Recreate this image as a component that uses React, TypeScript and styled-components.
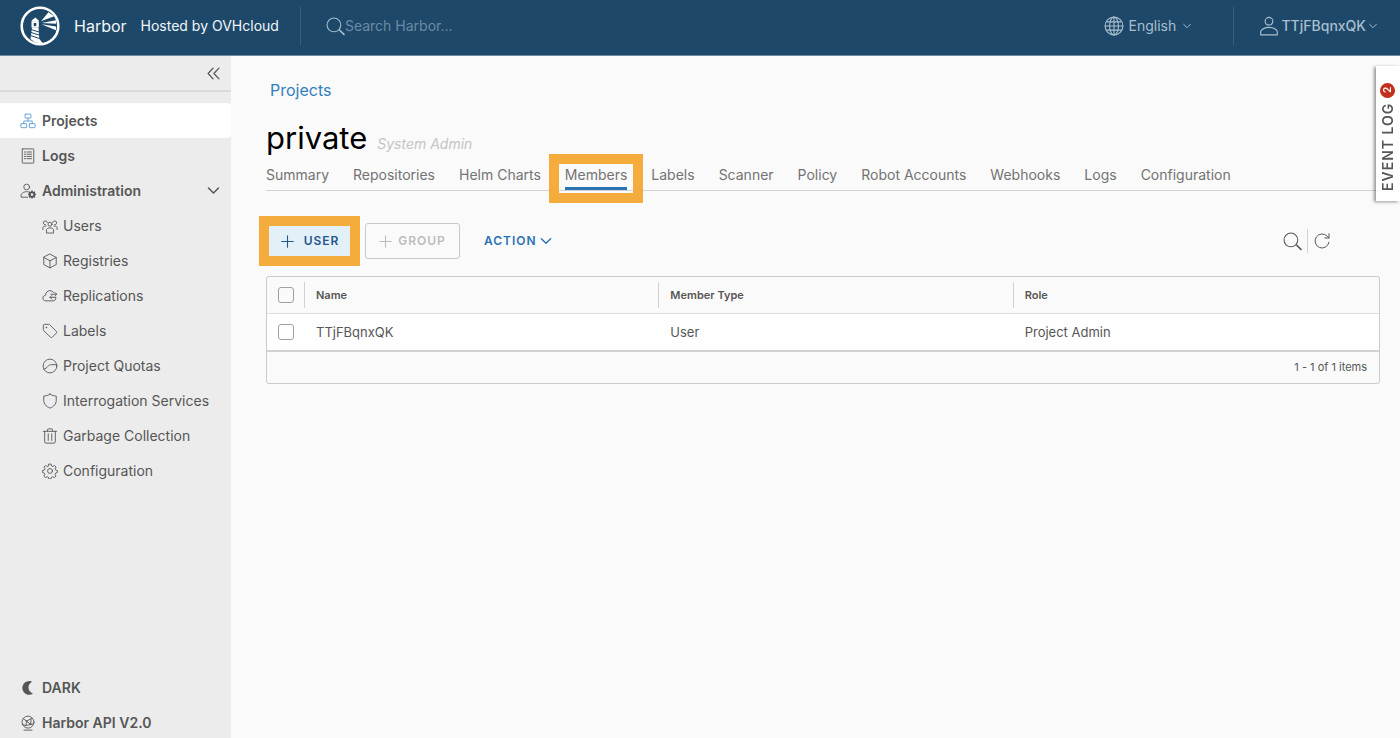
import React from "react";
import styled, { createGlobalStyle, css } from "styled-components";

const color = {
  header: "#1d486a",
  headerText: "#f2f6f9",
  headerMuted: "#a9bfce",
  page: "#fafafa",
  side: "#ececec",
  line: "#d2d2d2",
  text: "#565656",
  muted: "#737373",
  link: "#3180bd",
  accent: "#2b72b5",
  mark: "#f4ad3d",
};

const GlobalStyle = createGlobalStyle`
  *, *::before, *::after { box-sizing: border-box; }
  body {
    margin: 0;
    background: ${color.page};
    color: ${color.text};
    font-family: Inter, "Liberation Sans", sans-serif;
    font-size: 14px;
    line-height: 20px;
  }
  a { color: inherit; text-decoration: none; }
  button, input, select { font: inherit; color: inherit; }
  button { background: none; border: 0; padding: 0; cursor: pointer; }
  ul { list-style: none; margin: 0; padding: 0; }
`;

/* ---------- icons ---------- */

const Svg = styled.svg<{ $size: number }>`
  width: ${(p) => p.$size}px;
  height: ${(p) => p.$size}px;
  flex: none;
  display: block;
  fill: none;
  stroke: currentColor;
  stroke-width: 2;
  stroke-linecap: round;
  stroke-linejoin: round;

  .solid {
    fill: currentColor;
    stroke: none;
  }
`;

const shapes: Record<string, React.ReactNode> = {
  search: (
    <>
      <circle cx="15" cy="15" r="13" />
      <path d="M26 25l8 8" strokeWidth="3" />
    </>
  ),
  globe: (
    <>
      <circle cx="18" cy="18" r="16" />
      <ellipse cx="18" cy="18" rx="8" ry="16" />
      <path d="M18 2v32M2 18h32M5 10.500h26M5 25.500h26" />
    </>
  ),
  user: (
    <>
      <circle cx="18" cy="9.500" r="7" />
      <path d="M3 34v-6.500c3-4.500 8-7 15-7s12 2.500 15 7V34z" />
    </>
  ),
  caret: <path d="M6 12l12 12 12-12" strokeWidth="3.500" />,
  collapse: <path d="M17 5L5 18l12 13M31 5L19 18l12 13" strokeWidth="3" />,
  projects: (
    <>
      <rect x="11.500" y="2.500" width="13" height="9" rx="1" />
      <rect x="2" y="24" width="13" height="9" rx="1" />
      <rect x="21" y="24" width="13" height="9" rx="1" />
      <path d="M18 11.500V18M8.500 24v-6h19v6" />
    </>
  ),
  logs: (
    <>
      <rect x="5" y="2" width="26" height="32" rx="1" />
      <path d="M10 9h3M10 14h3M10 19h3M10 24h3M16 9h10M16 14h10M16 19h10M16 24h10" />
    </>
  ),
  admin: (
    <>
      <circle cx="15" cy="9" r="6.500" />
      <path d="M17 32H2.500v-6c2.500-4 7-6.500 12.500-6.500 1.500 0 2.500 0 4 .5" />
      <circle cx="27" cy="26" r="5" strokeWidth="4" />
      <path
        strokeWidth="3.500"
        strokeLinecap="butt"
        d="M27 17v4M27 31v4M18 26h4M32 26h4M20.600 19.600l3 3M30.400 29.400l3 3M20.600 32.400l3-3M30.400 22.600l3-3"
      />
    </>
  ),
  users: (
    <>
      <circle cx="18" cy="14" r="4.500" />
      <path d="M10 33v-7c2-2.500 4.500-3.800 8-3.800s6 1.300 8 3.800v7z" />
      <path d="M12 10a4.500 4.500 0 1 0-4 5.500M24 10a4.500 4.500 0 1 1 4 5.500M2 26v-5c1.500-2 4-3 7-3M34 26v-5c-1.500-2-4-3-7-3" />
    </>
  ),
  registries: <path d="M18 2.500l14 7.500v16l-14 7.500L4 26V10zM4 10l14 7.500L32 10M18 17.500v16" />,
  replications: (
    <>
      <path d="M31 22c.5 4-2 7-6 7H9c-4 0-7-2.600-7-6.300 0-3.500 2.500-6 6-6.300C8 10 12.500 6 18 6c3.500 0 6.500 1.500 8 4" />
      <path d="M20 14h13M29 10l4 4-4 4M31 21H18M22 17l-4 4 4 4" />
    </>
  ),
  labels: (
    <>
      <path d="M3 5.500A2.500 2.500 0 0 1 5.500 3H15c1 0 1.800.3 2.500 1l15 15c1 1 1 2.500 0 3.500l-9.500 9.500c-1 1-2.500 1-3.500 0L4 17.500C3.300 16.800 3 16 3 15z" />
      <circle cx="10" cy="10" r="1.800" className="solid" />
    </>
  ),
  quotas: (
    <>
      <circle cx="18" cy="18" r="15.500" />
      <path d="M4 25c4-1 7-3 9-6s5-4 9-4h11" />
    </>
  ),
  shield: <path d="M18 2.500c4 2.800 8.500 4 14 4.300V17c0 8-5.500 13.500-14 17C9.500 30.500 4 25 4 17V6.800c5.500-.3 10-1.500 14-4.300z" />,
  trash: (
    <path d="M3 7.500h30M6 7.500V31a3 3 0 0 0 3 3h18a3 3 0 0 0 3-3V7.500M12.500 7V3.500c0-1 .5-1.500 1.500-1.500h8c1 0 1.500.5 1.500 1.500V7M14 13v15M22 13v15" />
  ),
  gear: (
    <>
      <circle cx="18" cy="18" r="5.500" />
      <path d="M15.500 2.500h5l1.200 4.300 2.600 1.100 3.900-2.200 3.500 3.500-2.200 3.900 1.100 2.600 4 1.300v4.500l-4.200 1.400-1.100 2.600 2.200 3.900-3.500 3.500-3.900-2.200-2.600 1.100-1.300 4h-4.700l-1.300-4-2.600-1.100-3.900 2.200-3.500-3.500 2.200-3.900-1.100-2.600-4-1.400V17l4.200-1.300 1.100-2.600-2.200-3.900 3.500-3.500 3.900 2.200 2.600-1.100z" />
    </>
  ),
  moon: (
    <path
      className="solid"
      d="M28 31.500A15.500 15.500 0 1 1 25.500 3 1 1 0 0 1 26 4.800C21.500 7.500 19 11.500 19 17c0 6 3.500 10.500 9 12.700 1 .4 1 1.400 0 1.800z"
    />
  ),
  api: (
    <>
      <circle cx="18" cy="16" r="13.500" />
      <path d="M7 8l8 6 10-6M15 14l-2 10-8-3M15 14l9 7 6-1M24 21l-11 3M25 8l-1 13M9 34h18" />
      <circle cx="15" cy="14" r="2" className="solid" />
      <circle cx="24" cy="21" r="2" className="solid" />
    </>
  ),
  plus: <path d="M18 2v32M2 18h32" strokeWidth="3" />,
  refresh: <path d="M32 20.500A14 14 0 1 1 28.500 8.500L32 12M32 3.500V12h-8.500" />,
};

const Icon = ({ name, size = 16 }: { name: string; size?: number }) => (
  <Svg $size={size} viewBox="0 0 36 36" aria-hidden="true">
    {shapes[name]}
  </Svg>
);

const LogoSvg = styled.svg`
  width: 40px;
  height: 40px;
  flex: none;
`;

const Logo = () => (
  <LogoSvg viewBox="0 0 40 40" aria-hidden="true">
    <circle cx="20" cy="20" r="18.300" fill="none" stroke="#fff" strokeWidth="2.600" />
    <path fill="#fff" d="M15.300 11.500l3.400 3v1.300h-7v-1.300z" />
    <path fill="#fff" fillRule="evenodd" d="M11.500 15.500h7.300v6h-7.300zM13.700 17v3h2.600v-3z" />
    <path fill="#fff" d="M21 15.200l7.500-9 5.500 4zM21.500 17L36 14.200v3.600zM21.500 18.200L36 20.500v3.800z" />
    <path fill="#fff" d="M12 21.500h6.500l.8 11.500 3.700 4.500-8-1-4.500-3.500z" />
    <path stroke={color.header} strokeWidth="1" fill="none" d="M11 23.500l8 2.500M11 26.500l8 2.500M10.500 29.500l9 3" />
  </LogoSvg>
);

/* ---------- header ---------- */

const Header = styled.header`
  display: flex;
  align-items: center;
  height: 56px;
  padding: 0 22px 3px 20px;
  background: ${color.header};
  border-bottom: 1px solid #6f8ca2;
  color: ${color.headerText};
`;

const Brand = styled.a`
  display: flex;
  align-items: center;
  gap: 14px;
  font-size: 14px;
`;

const BrandName = styled.span`
  font-size: 16px;
`;

const Rule = styled.span`
  width: 1px;
  height: 38px;
  margin: 0 25px 0 21px;
  background: #35607f;
`;

const Search = styled.label`
  display: flex;
  align-items: center;
  flex: 1;
  color: ${color.headerMuted};
`;

const SearchInput = styled.input`
  flex: 1;
  min-width: 0;
  padding: 0;
  border: 0;
  outline: 0;
  background: none;

  &::placeholder {
    color: #6d8ba2;
    opacity: 1;
  }
`;

const Language = styled.label`
  display: flex;
  align-items: center;
  gap: 4px;
  margin-right: 20px;
  color: ${color.headerMuted};
`;

const LanguageSelect = styled.select`
  appearance: none;
  width: 50px;
  padding: 0;
  border: 0;
  background: none;
`;

const UserButton = styled.button`
  display: flex;
  align-items: center;
  gap: 2px;
  color: ${color.headerMuted};
  font-weight: 500;
`;

/* ---------- side navigation ---------- */

const Body = styled.div`
  display: flex;
  min-height: calc(100vh - 56px);
`;

const Side = styled.nav`
  display: flex;
  flex-direction: column;
  flex: none;
  width: 231px;
  background: ${color.side};
`;

const CollapseBar = styled.div`
  display: flex;
  justify-content: flex-end;
  align-items: center;
  height: 36px;
  margin-bottom: 11px;
  padding: 0 10px;
  border-bottom: 2px solid #dadada;
`;

const navRow = css`
  display: flex;
  align-items: center;
  gap: 6px;
  width: 100%;
  height: 35px;
  padding: 0 10px 0 20px;
`;

const NavLink = styled.a<{ $active?: boolean }>`
  ${navRow}
  font-weight: 600;
  border-radius: 0 4px 4px 0;
  background: ${(p) => (p.$active ? "#fff" : "none")};

  svg {
    color: ${(p) => (p.$active ? "#5b9bd5" : "inherit")};
  }
`;

const NavGroup = styled.button`
  ${navRow}
  font-weight: 600;

  span {
    flex: 1;
    text-align: left;
  }
`;

const SubLink = styled.a`
  ${navRow}
  gap: 5px;
  padding-left: 42px;
`;

const SideFoot = styled.div`
  display: flex;
  flex-direction: column;
  gap: 5px;
  margin-top: auto;
`;

const FootButton = styled.button`
  ${navRow}
  height: 30px;
  font-weight: 600;
`;

/* ---------- page ---------- */

const Main = styled.main`
  flex: 1;
  min-width: 0;
  padding: 23px 20px 24px 35px;
`;

const Crumb = styled.a`
  display: block;
  width: max-content;
  padding-left: 4px;
  font-size: 16px;
  line-height: 22px;
  color: ${color.link};
`;

const TitleRow = styled.div`
  display: flex;
  align-items: baseline;
  gap: 10px;
  margin-top: 19px;
`;

const Title = styled.h1`
  margin: 0;
  font-size: 31px;
  line-height: 36px;
  font-weight: 400;
  color: #000;
`;

const RoleNote = styled.em`
  color: #c4c4c4;
`;

const Tabs = styled.ul`
  display: flex;
  gap: 24px;
  margin: 5px -20px 0 0;
  border-bottom: 1px solid ${color.line};
`;

const Tab = styled.li<{ $active?: boolean }>`
  position: relative;
  height: 29px;
  padding-top: 4px;
  color: ${color.muted};
  white-space: nowrap;
  box-shadow: ${(p) => (p.$active ? `inset 0 -3px ${color.accent}` : "none")};
`;

const Mark = styled.span<{ $inset: string }>`
  position: absolute;
  inset: ${(p) => p.$inset};
  border: 10px solid ${color.mark};
  pointer-events: none;
`;

const Toolbar = styled.div`
  display: flex;
  align-items: center;
  margin: 32px 49px 17px 0;
`;

const ToolButton = styled.button<{ $kind: "primary" | "disabled" | "plain" }>`
  position: relative;
  display: flex;
  align-items: center;
  justify-content: center;
  gap: ${(p) => (p.$kind === "primary" ? 10 : p.$kind === "plain" ? 2 : 6)}px;
  height: 36px;
  border-radius: 3px;
  font-size: 12px;
  font-weight: 600;
  letter-spacing: 1px;

  ${(p) =>
    p.$kind === "primary" &&
    css`
      width: 88px;
      background: #e3f0f7;
      color: #25558f;
    `}
  ${(p) =>
    p.$kind === "disabled" &&
    css`
      width: 95px;
      margin: 0 24px 0 11px;
      border: 1px solid #c8c8c8;
      color: #bdbdbd;
    `}
  ${(p) =>
    p.$kind === "plain" &&
    css`
      color: ${color.accent};
    `}
`;

const GridActions = styled.div`
  display: flex;
  align-items: center;
  gap: 5px;
  margin-left: auto;
`;

const GridRule = styled.span`
  width: 1px;
  height: 24px;
  background: ${color.line};
`;

const Datagrid = styled.div`
  border: 1px solid #cbcbcb;
  border-radius: 3px;
`;

const Table = styled.table`
  display: block;
  font-size: 13px;
  line-height: 18px;

  thead,
  tbody {
    display: block;
  }
`;

const Row = styled.tr<{ $head?: boolean }>`
  display: grid;
  grid-template-columns: 37px repeat(3, 1fr);
  align-items: center;
  height: ${(p) => (p.$head ? 36 : 39)}px;
  padding-right: 12px;
  background: ${(p) => (p.$head ? "none" : "#fff")};
  border-bottom: ${(p) => (p.$head ? "none" : `2px solid ${color.line}`)};
  border-top: ${(p) => (p.$head ? "none" : "1px solid #dedede")};
`;

const HeadCell = styled.th`
  height: 26px;
  padding: 4px 11px;
  border-left: 1px solid ${color.line};
  text-align: left;
  font-size: 11px;
  font-weight: 600;
`;

const Cell = styled.td`
  padding: 0 12px;
`;

const CheckCell = styled.td`
  display: flex;
  padding: 0 0 0 11px;
`;

const Checkbox = styled.input`
  appearance: none;
  width: 16px;
  height: 16px;
  margin: 0;
  border: 1px solid #a0a0a0;
  border-radius: 3px;
`;

const GridFoot = styled.div`
  padding: 5px 12px 6px;
  text-align: right;
  font-size: 11px;
  line-height: 20px;
`;

const EventLog = styled.button`
  position: fixed;
  top: 66px;
  right: 0;
  display: flex;
  align-items: center;
  gap: 5px;
  width: 24px;
  height: 135px;
  padding: 10px 0;
  background: #fff;
  box-shadow: 2px -1px 3px rgba(0, 0, 0, 0.4);
  writing-mode: vertical-rl;
  transform: rotate(180deg);
  font-size: 14px;
  font-weight: 600;
  line-height: 22px;
  letter-spacing: 1px;
`;

const Badge = styled.span`
  width: 15px;
  height: 15px;
  border-radius: 8px;
  background: #c0301c;
  color: #fff;
  font-size: 10px;
  line-height: 15px;
  letter-spacing: 0;
  text-align: center;
`;

const subItems = [
  ["users", "Users"],
  ["registries", "Registries"],
  ["replications", "Replications"],
  ["labels", "Labels"],
  ["quotas", "Project Quotas"],
  ["shield", "Interrogation Services"],
  ["trash", "Garbage Collection"],
  ["gear", "Configuration"],
];

const tabs = [
  "Summary",
  "Repositories",
  "Helm Charts",
  "Members",
  "Labels",
  "Scanner",
  "Policy",
  "Robot Accounts",
  "Webhooks",
  "Logs",
  "Configuration",
];

const members = [{ name: "TTjFBqnxQK", type: "User", role: "Project Admin" }];

export default function App() {
  return (
    <>
      <GlobalStyle />
      <Header>
        <Brand href="#">
          <Logo />
          <BrandName>Harbor</BrandName>
          <span>Hosted by OVHcloud</span>
        </Brand>
        <Rule />
        <Search>
          <Icon name="search" size={19} />
          <SearchInput type="text" placeholder="Search Harbor..." aria-label="Search Harbor" />
        </Search>
        <Language>
          <Icon name="globe" size={20} />
          <LanguageSelect aria-label="Language">
            <option>English</option>
          </LanguageSelect>
          <Icon name="caret" size={10} />
        </Language>
        <Rule />
        <UserButton type="button">
          <Icon name="user" size={20} />
          TTjFBqnxQK
          <Icon name="caret" size={10} />
        </UserButton>
      </Header>
      <Body>
        <Side>
          <CollapseBar>
            <button type="button" aria-label="Collapse navigation">
              <Icon name="collapse" size={15} />
            </button>
          </CollapseBar>
          <NavLink href="#" $active>
            <Icon name="projects" />
            Projects
          </NavLink>
          <NavLink href="#">
            <Icon name="logs" />
            Logs
          </NavLink>
          <NavGroup type="button" aria-expanded="true">
            <Icon name="admin" />
            <span>Administration</span>
            <Icon name="caret" size={15} />
          </NavGroup>
          {subItems.map(([icon, label]) => (
            <SubLink href="#" key={label}>
              <Icon name={icon} />
              {label}
            </SubLink>
          ))}
          <SideFoot>
            <FootButton type="button">
              <Icon name="moon" />
              DARK
            </FootButton>
            <FootButton as="a" href="#">
              <Icon name="api" />
              Harbor API V2.0
            </FootButton>
          </SideFoot>
        </Side>
        <Main>
          <Crumb href="#">Projects</Crumb>
          <TitleRow>
            <Title>private</Title>
            <RoleNote>System Admin</RoleNote>
          </TitleRow>
          <Tabs>
            {tabs.map((tab) => (
              <Tab key={tab} $active={tab === "Members"}>
                <a href="#">{tab}</a>
                {tab === "Members" && <Mark $inset="-7px -16px -13px" />}
              </Tab>
            ))}
          </Tabs>
          <Toolbar>
            <ToolButton type="button" $kind="primary">
              <Icon name="plus" size={13} />
              USER
              <Mark $inset="-7px -6px -7px -7px" />
            </ToolButton>
            <ToolButton type="button" $kind="disabled" disabled>
              <Icon name="plus" size={13} />
              GROUP
            </ToolButton>
            <ToolButton type="button" $kind="plain">
              ACTION
              <Icon name="caret" size={14} />
            </ToolButton>
            <GridActions>
              <button type="button" aria-label="Search members">
                <Icon name="search" size={19} />
              </button>
              <GridRule />
              <button type="button" aria-label="Refresh">
                <Icon name="refresh" size={18} />
              </button>
            </GridActions>
          </Toolbar>
          <Datagrid>
            <Table>
              <thead>
                <Row $head>
                  <CheckCell>
                    <Checkbox type="checkbox" aria-label="Select all members" />
                  </CheckCell>
                  <HeadCell scope="col">Name</HeadCell>
                  <HeadCell scope="col">Member Type</HeadCell>
                  <HeadCell scope="col">Role</HeadCell>
                </Row>
              </thead>
              <tbody>
                {members.map((m) => (
                  <Row key={m.name}>
                    <CheckCell>
                      <Checkbox type="checkbox" aria-label={`Select ${m.name}`} />
                    </CheckCell>
                    <Cell>{m.name}</Cell>
                    <Cell>{m.type}</Cell>
                    <Cell>{m.role}</Cell>
                  </Row>
                ))}
              </tbody>
            </Table>
            <GridFoot>1 - 1 of 1 items</GridFoot>
          </Datagrid>
        </Main>
      </Body>
      <EventLog type="button">
        EVENT LOG
        <Badge>2</Badge>
      </EventLog>
    </>
  );
}
